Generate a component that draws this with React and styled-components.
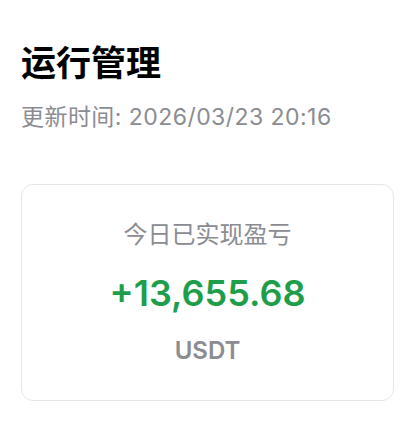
import React from "react";
import styled, { createGlobalStyle } from "styled-components";

const GlobalStyle = createGlobalStyle`
  html, body {
    margin: 0;
    padding: 0;
    background: #ffffff;
  }
  body {
    font-family: Inter, "Noto Sans CJK SC", "Noto Sans", sans-serif;
    -webkit-font-smoothing: antialiased;
  }
`;

const Page = styled.div`
  width: 416px;
  height: 422px;
  box-sizing: border-box;
  padding: 41px 21px 0 21px;
  display: flex;
  flex-direction: column;
`;

const Header = styled.header`
  display: flex;
  flex-direction: column;
  gap: 19px;
`;

const Title = styled.h1`
  margin: 0;
  font-size: 35px;
  line-height: 44px;
  font-weight: 700;
  color: #000000;
`;

const UpdatedAt = styled.div`
  font-size: 23px;
  line-height: 27px;
  letter-spacing: 0.45px;
  color: #8a8c92;
`;

const StatCard = styled.section`
  margin-top: 53px;
  width: 373px;
  height: 217px;
  box-sizing: border-box;
  border: 1.5px solid #e6e6e8;
  border-radius: 12px;
  display: flex;
  flex-direction: column;
  align-items: center;
  justify-content: center;
  gap: 22px;
`;

const StatLabel = styled.div`
  font-size: 24px;
  line-height: 28px;
  color: #8a8c92;
`;

const StatValue = styled.div`
  font-size: 36px;
  line-height: 44px;
  font-weight: 600;
  color: ${(p) => (p.$positive ? "#1e9e4a" : "#e5484d")};
`;

const StatUnit = styled.div`
  font-size: 24px;
  line-height: 28px;
  font-weight: 600;
  color: #8a8c92;
`;

export default function App() {
  return (
    <>
      <GlobalStyle />
      <Page>
        <Header>
          <Title>运行管理</Title>
          <UpdatedAt>更新时间: 2026/03/23 20:16</UpdatedAt>
        </Header>
        <StatCard>
          <StatLabel>今日已实现盈亏</StatLabel>
          <StatValue $positive>+13,655.68</StatValue>
          <StatUnit>USDT</StatUnit>
        </StatCard>
      </Page>
    </>
  );
}
